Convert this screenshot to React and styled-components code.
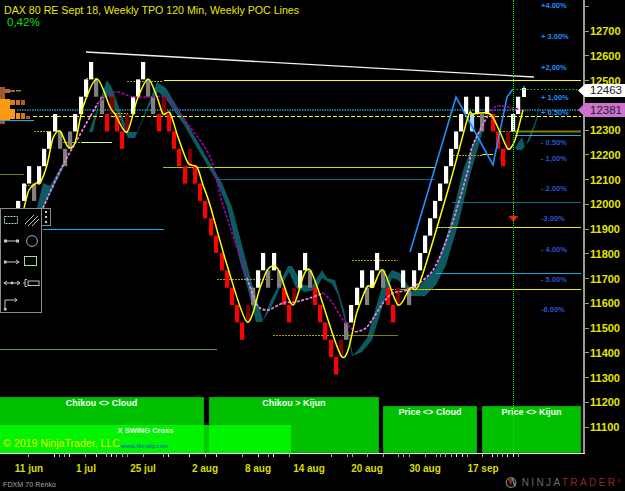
import React from 'react';
import styled, { createGlobalStyle } from 'styled-components';

const Global = createGlobalStyle`
  html, body { margin: 0; padding: 0; background: #000; }
`;

const Page = styled.div`
  position: relative;
  width: 625px;
  height: 491px;
  overflow: hidden;
  background: #000;
  font-family: "Liberation Sans", Arial, sans-serif;
  display: flex;
  flex-direction: column;
`;
const ChartRow = styled.div`
  display: flex;
  height: 453px;
  flex: none;
`;
const Plot = styled.div`
  position: relative;
  width: 583px;
  height: 453px;
  flex: none;
`;
const ChartSvg = styled.svg`
  display: block;
`;
const Title = styled.div`
  position: absolute;
  left: 4px;
  top: 3px;
  font-size: 10.65px;
  line-height: 14px;
  color: #e8e800;
  white-space: nowrap;
`;
const Change = styled.div`
  position: absolute;
  left: 7px;
  top: 15px;
  font-size: 11.5px;
  line-height: 15px;
  color: #00e000;
`;
const PriceAxis = styled.div`
  flex: 1;
  border-left: 2px solid #9a9a8c;
  overflow: hidden;
`;
const PriceList = styled.div`
  margin-top: -6px;
  display: flex;
  flex-direction: column;
`;
const PriceRow = styled.div`
  height: 24.75px;
  display: flex;
  align-items: center;
  gap: 1px;
  color: #e6e600;
  font-size: 11px;
  font-weight: 700;
  &::before {
    content: "";
    width: 4px;
    height: 1px;
    background: #9a9a8c;
  }
`;
const Flag = styled.div`
  position: absolute;
  left: 578px;
  width: 47px;
  top: ${p => p.$top}px;
  height: ${p => p.$h}px;
  background: ${p => p.$bg};
  clip-path: polygon(0 50%, 7px 0, 100% 0, 100% 100%, 7px 100%);
  color: #202020;
  font-size: 11.5px;
  line-height: ${p => p.$h}px;
  padding-left: 12px;
  box-sizing: border-box;
`;
const PanelRow = styled.div`
  position: absolute;
  left: 0;
  bottom: 0;
  height: 56px;
  width: 581px;
  display: flex;
  align-items: flex-end;
`;
const Panel = styled.div`
  width: ${p => p.$w}px;
  height: ${p => p.$h}px;
  margin-right: ${p => p.$gap || 0}px;
  flex: none;
  box-sizing: border-box;
  background: #00c000;
  border: 1px solid #00a800;
  border-left-width: ${p => (p.$flush ? 0 : 1)}px;
  color: #f4fff4;
  font-size: 9px;
  font-weight: 700;
  text-align: center;
  line-height: 10px;
`;
const SwingBand = styled.div`
  position: absolute;
  left: 0;
  bottom: 0;
  width: 291px;
  height: 28px;
  background: rgba(0, 255, 0, 0.8);
`;
const SwingLabel = styled.div`
  position: absolute;
  left: 0;
  width: 291px;
  top: 0;
  text-align: center;
  color: #eaffea;
  font-size: 7.5px;
  font-weight: 700;
  line-height: 11px;
`;
const Copyright = styled.div`
  position: absolute;
  left: 3px;
  top: 11px;
  color: #e4f000;
  font-size: 10.6px;
  line-height: 14px;
  white-space: nowrap;
`;
const Site = styled.div`
  position: absolute;
  left: 121px;
  top: 17px;
  color: #0a78a8;
  font-size: 6px;
  font-weight: 700;
  line-height: 9px;
  white-space: nowrap;
`;
const Marker = styled.div`
  position: absolute;
  left: 513px;
  top: 0;
  height: 452px;
  border-left: 1px dotted #00f000;
`;
const Toolbar = styled.div`
  position: absolute;
  left: 0;
  top: 208px;
  width: 42px;
  height: 105px;
  box-sizing: border-box;
  background: #000;
  border: 1px solid #8a8a8a;
  display: grid;
  grid-template-columns: 21px 20px;
  grid-auto-rows: 21px;
  justify-items: center;
  align-items: center;
`;
const Handle = styled.div`
  position: absolute;
  left: 42px;
  top: 208px;
  width: 9px;
  height: 18px;
  box-sizing: border-box;
  background: #000;
  border: 1px solid #8a8a8a;
  border-left: 0;
  display: flex;
  flex-direction: column;
  align-items: center;
  justify-content: center;
  gap: 3px;
`;
const HandleDot = styled.span`
  width: 2px;
  height: 2px;
  background: #ccc;
`;
const TimeAxis = styled.div`
  flex: 1;
  display: flex;
  flex-direction: column;
`;
const Ticks = styled.svg`
  display: block;
  flex: none;
`;
const TimeLabels = styled.div`
  display: grid;
  grid-template-columns: 58px 56px 58px 66px 40px 62px 54px 62px 54px;
  height: 19px;
  align-items: center;
`;
const TimeLabel = styled.div`
  text-align: center;
  color: #dcdc00;
  font-size: 10px;
  font-weight: 700;
  white-space: nowrap;
`;
const Footer = styled.div`
  display: flex;
  align-items: center;
  justify-content: space-between;
  height: 13px;
  padding: 0 4px 0 3px;
`;
const Instrument = styled.div`
  color: #a8a8a8;
  font-size: 7px;
  letter-spacing: 0.1px;
`;
const Logo = styled.div`
  display: flex;
  align-items: center;
  gap: 2px;
  margin-top: -4px;
`;
const LogoText = styled.div`
  font-size: 10px;
  letter-spacing: 2.4px;
  color: #6b6b6b;
  white-space: nowrap;
`;
const LogoRed = styled.span`
  color: #8e2a22;
`;
const LogoMark = styled.span`
  font-size: 5px;
  letter-spacing: 0;
  color: #8e2a22;
  vertical-align: 3px;
`;

const levelY = l => 62 + 17.36 * l;
const bricks = [
  [16,8,'w'],[22,7,'w'],[27,6,'w'],[32,7,'g'],[37,6,'w'],[42,5,'w'],[47,4,'w'],[53,3,'w'],[58,4,'g'],[63,5,'g'],[68,4,'g'],[73,3,'w'],[79,2,'w'],[84,1,'w'],[89,0,'w'],[94,1,'g'],[100,2,'g'],[105,3,'r'],[110,2,'d'],[115,3,'r'],[120,4,'r'],[125,3,'d'],[131,2,'w'],[136,1,'w'],[141,0,'w'],[146,1,'g'],[151,2,'g'],[157,3,'r'],[162,2,'d'],[167,3,'r'],[172,4,'r'],[177,5,'r'],[183,6,'r'],[188,5,'d'],[193,6,'r'],[198,7,'r'],[203,8,'r'],[209,9,'r'],[214,10,'r'],[220,11,'r'],[225,12,'r'],[230,13,'r'],[235,14,'r'],[240,15,'r'],[246,14,'d'],[251,13,'g'],[256,12,'w'],[261,11,'w'],[266,12,'g'],[272,11,'w'],[277,12,'g'],[282,13,'r'],[287,14,'r'],[292,13,'d'],[298,12,'w'],[303,11,'w'],[308,12,'g'],[313,13,'r'],[318,14,'r'],[323,15,'r'],[329,16,'r'],[334,17,'r'],[339,16,'d'],[344,15,'g'],[349,14,'w'],[355,13,'w'],[360,12,'w'],[365,13,'g'],[370,12,'w'],[375,11,'w'],[381,12,'g'],[386,13,'r'],[391,14,'r'],[396,13,'d'],[401,12,'w'],[407,13,'g'],[412,12,'w'],[418,11,'w'],[423,10,'w'],[428,9,'w'],[433,8,'w'],[438,7,'w'],[444,6,'w'],[449,5,'w'],[454,4,'w'],[459,3,'w'],[464,2,'w'],[470,3,'b'],[475,2,'w'],[480,3,'g'],[485,2,'w'],[491,3,'r'],[496,4,'r'],[501,5,'r'],[506,4,'d'],[511,3,'w'],[516,2,'w'],
];
const brickColor = { w: '#ffffff', g: '#808080', r: '#ff0000', d: '#7d0000', b: '#a8d4f4' };

const smooth = pts => {
  let d = `M${pts[0][0]} ${pts[0][1]}`;
  for (let i = 0; i < pts.length - 1; i++) {
    const p0 = pts[i - 1] || pts[i];
    const p1 = pts[i];
    const p2 = pts[i + 1];
    const p3 = pts[i + 2] || p2;
    const t = 0.14;
    d += ` C${(p1[0] + (p2[0] - p0[0]) * t).toFixed(1)} ${(p1[1] + (p2[1] - p0[1]) * t).toFixed(1)} ${(p2[0] - (p3[0] - p1[0]) * t).toFixed(1)} ${(p2[1] - (p3[1] - p1[1]) * t).toFixed(1)} ${p2[0]} ${p2[1]}`;
  }
  return d;
};

const yellowMA = [[24,208],[29,190],[36,183],[40,183],[47,165],[53,138],[60,131],[68,147],[75,143],[83,107],[97,79],[110,107],[115,114],[127,132],[137,100],[148,79],[157,97],[163,114],[170,113],[178,137],[188,163],[197,167],[203,185],[210,205],[227,265],[247,322],[260,288],[268,269],[278,269],[293,305],[310,270],[342,357],[357,312],[367,287],[373,287],[383,270],[398,305],[410,288],[420,282],[450,183],[468,117],[473,114],[490,114],[500,132],[508,149],[515,140],[523,110]];
const pinkA = [[43,208],[63,165],[98,103]];
const purpleA = [[98,103],[115,92],[133,97],[153,97],[167,98],[187,123],[210,157],[223,205],[247,278]];
const pinkB = [[247,278],[257,305],[268,310],[283,303],[295,302],[310,298],[323,293]];
const purpleB = [[323,293],[332,302],[343,320],[355,332]];
const pinkC = [[355,332],[367,327],[383,303],[393,293],[410,289],[433,270],[450,230],[468,170],[472,147],[488,115]];
const purpleC = [[488,115],[497,106],[513,108],[523,110]];

const cloud = [
  '37,208 43,183 50,186 62,165 65,165 43,208',
  '89,132 107,80 112,88 128,132 137,132 157,82 166,88 187,123 210,163 222,183 232,207 252,283 263,320 270,302 288,266 292,266 303,285 312,286 322,270 327,278 335,280 344,310 353,355 358,350 367,338 383,283 392,270 400,273 410,288 408,292 398,280 392,278 386,295 372,340 362,352 352,356 346,325 338,295 332,284 322,278 316,290 305,292 296,288 289,272 280,288 270,310 262,322 256,322 248,290 240,262 227,207 216,180 207,165 184,125 165,98 158,92 146,112 135,138 128,138 118,115 108,95 100,100 93,132',
  '407,296 413,290 420,285 436,268 450,225 463,170 472,147 480,127 484,127 476,155 470,175 458,225 446,265 436,285 425,296 417,296',
  '515,148 520,140 522,137 525,147 535,122 540,102 537,120 530,140 522,150 517,150',
];

const hLines = [
  [164,581,80,'#ffff00',1],
  [163,435,167,'#dede00',1],
  [216,435,179,'#0d6c8c',1],
  [452,581,202,'#0f6a8c',1],
  [437,581,227,'#eeee00',1],
  [436,581,273,'#1aa8dc',1],
  [400,581,289,'#eeee00',1],
  [515,581,131,'#808000',2],
  [515,581,135,'#20b0e0',1],
  [482,493,154,'#e8e800',1],
  [81,112,142,'#d8ff90',1],
  [0,34,120,'#10b0f0',1],
  [0,24,174,'#808000',1],
  [43,164,229,'#00b8f0',1],
  [0,217,349,'#5a8a98',1],
  [350,398,335,'#808000',1],
];
const dashLines = [
  [34,52,131],[60,81,142],[25,35,185],[86,97,78],[127,163,81],[115,128,113],[163,210,167],[217,273,279],[273,350,335],[352,398,260],[392,420,289],[453,482,155],[500,515,131],[400,435,289],[437,450,227],
];
const percents = [
  ['+4.00%',5,'#1e8fff'],['+ 3.00%',36,'#1e8fff'],['+2,00%',67,'#1e8fff'],['+ 1,00%',97,'#1e8fff'],['+ 0.50%',112,'#1e8fff'],
  ['- 0.50%',142,'#2f50d0'],['- 1,00%',158,'#2f50d0'],['- 2.00%',188,'#2f50d0'],['-3.00%',218,'#2f50d0'],['- 4.00%',249,'#2f50d0'],['- 5.00%',279,'#2f50d0'],['-6.00%',309,'#2f50d0'],
];
const hist = [
  [0,87,5,12,'#a05a30'],[5,89,5,4,'#a86a3a'],[10,90,5,2,'#9a6030'],[16,90,5,1.5,'#909000'],
  [0,99,10,21,'#ff9a14'],[10,100,5,5,'#d08020'],[16,100,4,5,'#c07030'],[21,100,4,5,'#a86030'],
  [10,109,5,10,'#ff9a14'],[16,113,4,6,'#f09018'],[21,113,4,6,'#c87820'],[26,116,4,3,'#a06020'],
  [0,120,5,4,'#a05a30'],
];

const prices = ['', 12700, 12600, 12500, '', 12300, 12200, 12100, 12000, 11900, 11800, 11700, 11600, 11500, 11400, 11300, 11200, 11100];
const timeTicks = [28,54,59,64,69,85,96,106,111,116,122,127,143,163,168,189,205,216,242,258,268,273,289,331,347,352,367,383,398,403,409,425,436,440,445,451,456,462,467,482,492,497,502,507,513,518];
const dates = ['11 jun','1 jul','25 jul','2 aug','8 aug','14 aug','20 aug','30 aug','17 sep'];

const ToolIcon = ({ children }) => (
  <svg width="18" height="14" viewBox="0 0 18 14" fill="none" stroke="#b8c8cc" strokeWidth="1">{children}</svg>
);

const tools = [
  <ToolIcon key="1"><rect x="1.5" y="3.5" width="13" height="7" strokeDasharray="2 1" stroke="#a8d8d0" /></ToolIcon>,
  <ToolIcon key="2"><path d="M2 11L11 2M5 13L15 3M9 13L16 6" stroke="#a8c4d8" /></ToolIcon>,
  <ToolIcon key="3"><path d="M1 7H16" stroke="#c8c8c8" /><path d="M1 5.5h3v3H1zM13 5.5h3v3h-3z" fill="#c8c8c8" stroke="none" /></ToolIcon>,
  <ToolIcon key="4"><circle cx="9" cy="7" r="5.4" stroke="#8ab4d4" /></ToolIcon>,
  <ToolIcon key="5"><path d="M1 7H16M13 5l3 2-3 2" stroke="#c8c8c8" /><path d="M1 5.5h2.5v3H1z" fill="#c8c8c8" stroke="none" /></ToolIcon>,
  <ToolIcon key="6"><rect x="1.5" y="1.5" width="12" height="9" stroke="#a8d8a0" /></ToolIcon>,
  <ToolIcon key="7"><path d="M1 7H17M4 5L1 7l3 2M14 5l3 2-3 2" stroke="#c8c8c8" /><circle cx="9" cy="7" r="1.4" fill="#c8c8c8" stroke="none" /></ToolIcon>,
  <ToolIcon key="8"><rect x="5" y="5" width="11" height="4.5" stroke="#b0c8d0" /><path d="M4 3.5H2v7h2M2 7H0" stroke="#c8c8c8" /></ToolIcon>,
  <ToolIcon key="9"><path d="M2 13V3H14M11.5 1L14 3l-2.5 2" stroke="#b8ccd8" /><rect x="1" y="11" width="2.5" height="2.5" fill="#c8c8c8" stroke="none" /></ToolIcon>,
];

const Chart = () => (
  <ChartSvg width="583" height="453" viewBox="0 0 583 453">
    {hist.map(([x, y, w, h, c], i) => <rect key={i} x={x} y={y} width={w} height={h} fill={c} />)}
    {cloud.map((p, i) => <polygon key={i} points={p} fill="#0c5b60" />)}
    <line x1="86" y1="52" x2="534" y2="77" stroke="#f0f0f0" strokeWidth="1.3" />
    <line x1="17" y1="110" x2="581" y2="110" stroke="#1a6f90" strokeWidth="2" strokeDasharray="1.5 1" />
    <line x1="33" y1="116.5" x2="581" y2="116.5" stroke="#ffff00" strokeWidth="1.2" strokeDasharray="4 2" />
    {hLines.map(([a, b, y, c, w], i) => <line key={i} x1={a} y1={y + 0.5} x2={b} y2={y + 0.5} stroke={c} strokeWidth={w} />)}
    {dashLines.map(([a, b, y], i) => <line key={i} x1={a} y1={y + 0.5} x2={b} y2={y + 0.5} stroke="#a8a800" strokeDasharray="2 1" />)}
    {bricks.map(([x, l, k], i) => <rect key={i} x={x} y={levelY(l)} width="4.2" height="17.4" fill={brickColor[k]} />)}
    <rect x="522" y="88" width="4" height="9" fill="#fff" />
    <rect x="523.5" y="86" width="1" height="3" fill="#ccc" />
    <polyline points="410,252 456,97 493,165 507,97 513,89" fill="none" stroke="#1e90ff" strokeWidth="1.6" />
    <path d={smooth(pinkA)} fill="none" stroke="#f080e8" strokeWidth="1.7" strokeDasharray="3 1.5" />
    <path d={smooth(purpleA)} fill="none" stroke="#a000a0" strokeWidth="1.7" strokeDasharray="3 1.5" />
    <path d={smooth(pinkB)} fill="none" stroke="#f080e8" strokeWidth="1.7" strokeDasharray="3 1.5" />
    <path d={smooth(purpleB)} fill="none" stroke="#a000a0" strokeWidth="1.7" strokeDasharray="3 1.5" />
    <path d={smooth(pinkC)} fill="none" stroke="#f080e8" strokeWidth="1.7" strokeDasharray="3 1.5" />
    <path d={smooth(purpleC)} fill="none" stroke="#a000a0" strokeWidth="1.7" strokeDasharray="3 1.5" />
    <path d={smooth(yellowMA)} fill="none" stroke="#ffff00" strokeWidth="1.5" />
    <line x1="513" y1="89.5" x2="581" y2="89.5" stroke="#10e010" strokeDasharray="1.5 2" />
    <line x1="513.5" y1="170" x2="513.5" y2="216" stroke="#ff0000" strokeDasharray="2 2" />
    <polygon points="508.5,216 518.5,216 513.5,222" fill="#ff1010" />
    {percents.map(([t, y, c]) => (
      <text key={t} x="541" y={y + 3} fill={c} fontSize="7.5" fontWeight="700" fontFamily="Liberation Sans, Arial, sans-serif">{t}</text>
    ))}
  </ChartSvg>
);

export default function App() {
  return (
    <Page>
      <Global />
      <ChartRow>
        <Plot>
          <Chart />
          <Title>DAX 80 RE Sept 18, Weekly TPO 120 Min, Weekly POC Lines</Title>
          <Change>0,42%</Change>
          <PanelRow>
            <Panel $w={204} $h={56} $gap={5} $flush>Chikou &lt;&gt; Cloud</Panel>
            <Panel $w={170} $h={56} $gap={4}>Chikou &gt; Kijun</Panel>
            <Panel $w={94} $h={47} $gap={5}>Price &lt;&gt; Cloud</Panel>
            <Panel $w={99} $h={47}>Price &lt;&gt; Kijun</Panel>
            <SwingBand>
              <SwingLabel>X SWING Cross</SwingLabel>
              <Copyright>© 2019 NinjaTrader, LLC</Copyright>
              <Site>www.fin-alg.com</Site>
            </SwingBand>
          </PanelRow>
          <Marker />
          <Toolbar>{tools}</Toolbar>
          <Handle><HandleDot /><HandleDot /><HandleDot /></Handle>
        </Plot>
        <PriceAxis>
          <PriceList>
            {prices.map((p, i) => <PriceRow key={i}>{p}</PriceRow>)}
          </PriceList>
        </PriceAxis>
      </ChartRow>
      <Flag $top={84} $h={13} $bg="#ffffff">12463</Flag>
      <Flag $top={103} $h={14} $bg="#d070d0">12381</Flag>
      <TimeAxis>
        <Ticks width="585" height="6" viewBox="0 0 585 6">
          <line x1="0" y1="0.5" x2="585" y2="0.5" stroke="#e8e8e8" />
          {timeTicks.map(x => <line key={x} x1={x + 0.5} y1="0" x2={x + 0.5} y2="4" stroke={x % 3 ? '#a8a8a0' : '#e8e8e8'} />)}
        </Ticks>
        <TimeLabels>
          {dates.map(d => <TimeLabel key={d}>{d}</TimeLabel>)}
        </TimeLabels>
        <Footer>
          <Instrument>FDXM 70 Renko</Instrument>
          <Logo>
            <svg width="16" height="11" viewBox="0 0 16 11">
              <circle cx="7" cy="5.5" r="4.8" fill="none" stroke="#777" strokeWidth="1.3" />
              <path d="M4 2l3 7 1.5-7z" fill="#8e2a22" />
              <path d="M8 1l3 8" stroke="#999" strokeWidth="1.2" />
            </svg>
            <LogoText>NINJA<LogoRed>TRADER</LogoRed><LogoMark>®</LogoMark></LogoText>
          </Logo>
        </Footer>
      </TimeAxis>
    </Page>
  );
}
